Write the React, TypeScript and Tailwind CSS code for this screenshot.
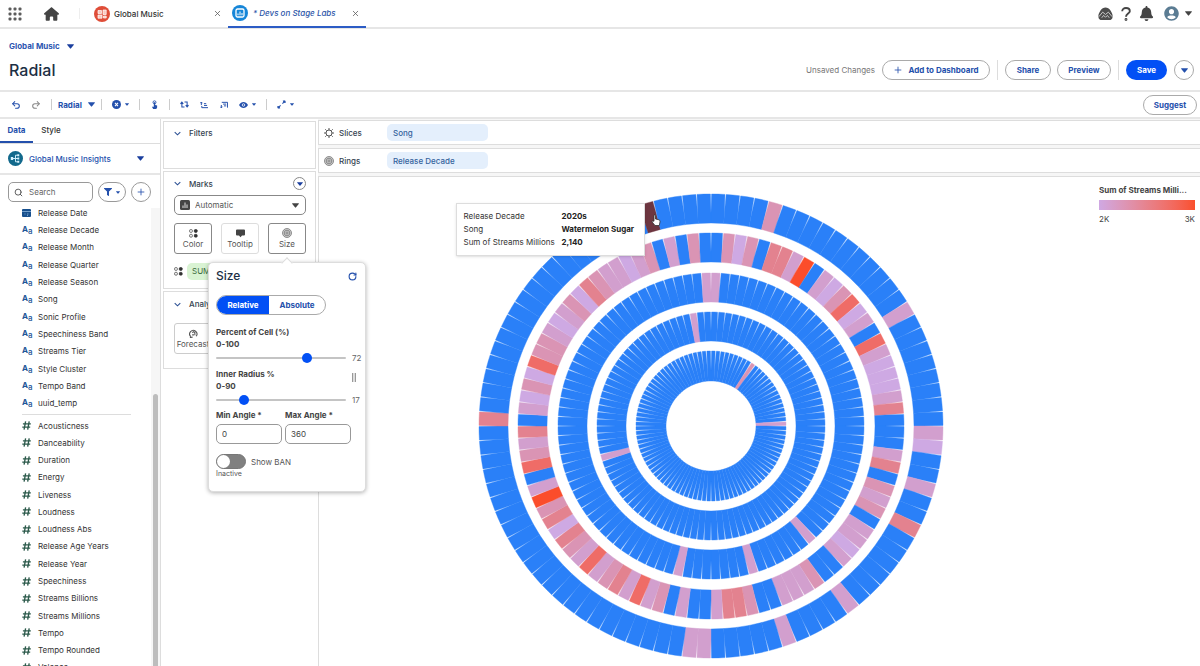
import React, { useState } from 'react'
import { Plus, Redo2, RotateCw, Search, Undo2, X } from 'lucide-react'
import { FaBell, FaFilter, FaUserCircle } from 'react-icons/fa'
import { FaHouse } from 'react-icons/fa6'

const dimensions = [
  'Release Date',
  'Release Decade',
  'Release Month',
  'Release Quarter',
  'Release Season',
  'Song',
  'Sonic Profile',
  'Speechiness Band',
  'Streams Tier',
  'Style Cluster',
  'Tempo Band',
  'uuid_temp',
]

const measures = [
  'Acousticness',
  'Danceability',
  'Duration',
  'Energy',
  'Liveness',
  'Loudness',
  'Loudness Abs',
  'Release Age Years',
  'Release Year',
  'Speechiness',
  'Streams Billions',
  'Streams Millions',
  'Tempo',
  'Tempo Rounded',
  'Valence',
]

// one letter per cell, low streams to high streams; B has no value in range
const cellColors: Record<string, string> = {
  B: '#2a80f8',
  l: '#cea9e3',
  p: '#d29fce',
  k: '#da94b4',
  s: '#e3828f',
  r: '#ef6c67',
  R: '#fb4d2b',
  D: '#6d3640',
}

const CELLS = 100

const sparse = (marks: Record<number, string>): string[] =>
  Array.from({ length: CELLS }, (_, i) => marks[i] ?? 'B')

const rings: { outer: number; inner: number; cells: string[] }[] = [
  {
    outer: 232,
    inner: 203,
    cells: sparse({ 4: 'k', 16: 'p', 25: 'p', 26: 'l', 29: 'p', 32: 's', 39: 'p', 44: 'p', 50: 'p', 51: 'p', 75: 's', 95: 'D' }),
  },
  {
    outer: 193,
    inner: 164,
    cells: (
      'BklkBsspRB' +
      'plkrlpBrpl' +
      'llpsBBBpsB' +
      'kpkBpplpBB' +
      'kpppBBkssp' +
      'BBpBkprpsk' +
      'prpkslskRp' +
      'BrkpsBplkl' +
      'rkkplpklsk' +
      'pplpkBpBkB'
    ).split(''),
  },
  { outer: 153, inner: 124, cells: sparse({ 0: 'p', 38: 'p', 45: 'p', 53: 'p', 99: 'p' }) },
  { outer: 114, inner: 85, cells: sparse({ 70: 'p', 97: 'p' }) },
  { outer: 75, inner: 45, cells: sparse({ 9: 'k', 24: 'p' }) },
]

const point = (radius: number, angle: number): string =>
  `${(radius * Math.sin(angle)).toFixed(2)},${(-radius * Math.cos(angle)).toFixed(2)}`

const cellPoints = (inner: number, outer: number, index: number): string => {
  const step = (Math.PI * 2) / CELLS
  const start = index * step
  const end = start + step
  const inset = 0.6 / outer
  const neck = inner + (outer - inner) * 0.35
  return [
    point(inner, start),
    point(neck, start),
    point(outer, start + inset),
    point(outer, (start + end) / 2),
    point(outer, end - inset),
    point(neck, end),
    point(inner, end),
  ].join(' ')
}

const RadialChart: React.FC = () => (
  <svg viewBox="-233 -233 466 466" className="block h-[466px] w-[466px]" role="img" aria-label="Streams by song and decade">
    {rings.map((ring) => (
      <g key={ring.outer}>
        {ring.cells.map((code, i) => (
          <polygon
            key={i}
            points={cellPoints(ring.inner, ring.outer, i)}
            fill={cellColors[code]}
            stroke={cellColors[code]}
            strokeWidth={0.4}
          />
        ))}
      </g>
    ))}
  </svg>
)

const Caret: React.FC<{ className?: string }> = ({ className = 'h-[5px] w-[7px]' }) => (
  <svg viewBox="0 0 8 5" className={`shrink-0 fill-current ${className}`}>
    <path d="M.6 0h6.8q.9.1.3.8L4.6 4.6q-.6.7-1.2 0L.3.8Q-.3.1.6 0z" />
  </svg>
)

const ColorIcon: React.FC = () => (
  <svg viewBox="0 0 10 10" className="h-[9px] w-[9px] shrink-0" fill="none" stroke="#555">
    <rect x=".7" y=".7" width="3" height="3" rx="1" />
    <rect x=".7" y="6" width="3" height="3" rx="1" />
    <rect x="6" y=".7" width="3" height="3" rx=".8" fill="#333" stroke="#333" />
    <rect x="6" y="6" width="3" height="3" rx=".8" fill="#333" stroke="#333" />
  </svg>
)

const RingsIcon: React.FC = () => (
  <svg viewBox="0 0 10 10" className="h-[10px] w-[10px] shrink-0" fill="#ccc" stroke="#777" strokeWidth=".8">
    <circle cx="5" cy="5" r="4.5" />
    <circle cx="5" cy="5" r="2.8" />
    <circle cx="5" cy="5" r="1.1" />
  </svg>
)

const SlicesIcon: React.FC = () => (
  <svg viewBox="0 0 10 10" className="h-[10px] w-[10px] shrink-0" fill="none" stroke="#555">
    <circle cx="5" cy="5" r="3" />
    <path d="M5 0v2M5 8v2M0 5h2M8 5h2M1.300 1.300l1.200 1.200M7.500 7.500l1.200 1.200M1.300 8.700l1.200-1.200M7.500 2.500l1.200-1.200" />
  </svg>
)

const Chevron: React.FC = () => (
  <svg viewBox="0 0 8 5" className="h-[5px] w-[7px]" fill="none" stroke="#2a4f93" strokeWidth="1.2">
    <path d="M.8.8L4 4 7.200.8" />
  </svg>
)

const TopBar: React.FC = () => (
  <header className="flex h-[29px] shrink-0 items-stretch border-b-2 border-[#e6e6e6] pl-2 pr-2">
    <button className="flex w-[14px] items-center" aria-label="App launcher">
      <svg viewBox="0 0 14 14" className="h-[14px] w-[14px]" fill="#5c5c5c">
        {[2, 7, 12].map((y) =>
          [2, 7, 12].map((x) => <rect key={`${x}${y}`} x={x - 1.5} y={y - 1.5} width="3" height="3" rx="1" />)
        )}
      </svg>
    </button>
    <a href="#home" className="ml-[22px] flex items-center text-[#444]" aria-label="Home">
      <FaHouse className="h-[14px] w-[15px]" />
    </a>
    <span className="my-2 ml-5 w-px bg-[#eee]" />
    <div className="ml-[14px] flex w-[134px] items-center">
      <svg viewBox="0 0 16 16" className="h-4 w-4">
        <circle cx="8" cy="8" r="8" fill="#df4d38" />
        <path d="M4 4.500h3.500v3H4zM9 4h3.200v4.500H9zM4 9h4v3.200H4zM9.500 10h2.700v2H9.500z" fill="#f9c9c0" stroke="#fff" strokeWidth=".7" />
      </svg>
      <a href="#global-music" className="ml-1 text-[8px] font-medium text-[#333]">Global Music</a>
      <button className="ml-auto mr-[6px] text-[#555]" aria-label="Close Global Music">
        <X className="h-[9px] w-[9px]" />
      </button>
    </div>
    <div className="-mb-px flex w-[138px] items-center border-b-2 border-[#2c5cc5] pl-1">
      <svg viewBox="0 0 16 16" className="h-4 w-4">
        <circle cx="8" cy="8" r="8" fill="#1686d8" />
        <rect x="4" y="4" width="8" height="8" rx="1.500" fill="none" stroke="#fff" strokeWidth="1.300" />
        <path d="M6 10.300V8.500M8 10.300V6.500M10 10.300V8" stroke="#fff" />
      </svg>
      <a href="#labs" className="ml-[5px] text-[8px] font-medium italic text-[#2c56a8]">* Devs on Stage Labs</a>
      <button className="ml-auto mr-[6px] text-[#555]" aria-label="Close Devs on Stage Labs">
        <X className="h-[9px] w-[9px]" />
      </button>
    </div>
    <div className="ml-auto flex items-center text-[#444]">
      <button aria-label="Guidance">
        <svg viewBox="0 0 16 14" className="h-[14px] w-[15px]">
          <path d="M8 0c2 0 4 1.200 5.500 3.500C15 6 16 8 15.500 10.500 15.300 12.500 14 13.500 12 13.500H4C2 13.500.700 12.500.5 10.500 0 8 1 6 2.500 3.500 4 1.200 6 0 8 0z" fill="#4d4d4d" />
          <path d="M1 9.800L5 5 8 7.500 11 5 15 9.800M4 11L6 8.500 8 10.500 10 8.500 12 11" fill="none" stroke="#ddd" strokeWidth=".9" />
        </svg>
      </button>
      <button className="ml-2" aria-label="Help">
        <svg viewBox="0 0 10 14" className="h-[14px] w-[10px]" fill="none" stroke="#444" strokeWidth="1.900">
          <path d="M1.200 4.300C1.200 2.200 2.800 1 5 1s3.800 1.200 3.800 3.200C8.800 6.500 5 6.800 5 9.800" />
          <circle cx="5" cy="12.500" r=".5" />
        </svg>
      </button>
      <button className="ml-2" aria-label="Notifications">
        <FaBell className="h-[15px] w-[15px]" />
      </button>
      <button className="ml-[10px] flex items-center gap-[6px]" aria-label="Account">
        <FaUserCircle className="h-[15px] w-[15px] text-[#5b7c93]" />
        <Caret />
      </button>
    </div>
  </header>
)

const PageHeader: React.FC = () => (
  <div className="flex h-[63px] shrink-0 items-end justify-between border-b-2 border-[#e6e6e6] pb-[10px] pl-[9px] pr-[6px]">
    <div>
      <button className="flex items-center gap-[7px] text-[8px] font-bold leading-[10px] text-[#2c56b0]">
        Global Music
        <Caret className="h-[5px] w-[7px] text-[#1b3f9e]" />
      </button>
      <h1 className="mt-[9px] text-base leading-5 font-medium text-[#1d2f45]">Radial</h1>
    </div>
    <div className="flex items-center text-[8px] font-bold text-[#2450ac]">
      <span className="mr-[7px] font-normal text-[#777]">Unsaved Changes</span>
      <button className="flex h-5 w-[108px] items-center justify-center gap-[5px] rounded-full border border-[#aaa]">
        <Plus className="h-[10px] w-[10px]" />
        Add to Dashboard
      </button>
      <span className="ml-[7px] h-5 w-px bg-[#ddd]" />
      <button className="ml-[7px] h-5 w-[46px] rounded-full border border-[#aaa]">Share</button>
      <button className="ml-[6px] h-5 w-[54px] rounded-full border border-[#aaa]">Preview</button>
      <span className="ml-[7px] h-5 w-px bg-[#ddd]" />
      <button className="ml-[7px] h-5 w-[41px] rounded-full bg-[#0250f5] text-white">Save</button>
      <button className="ml-[7px] flex h-5 w-5 items-center justify-center rounded-full border border-[#aaa]" aria-label="More save options">
        <Caret />
      </button>
    </div>
  </div>
)

const Divider: React.FC = () => <span className="h-[11px] w-px shrink-0 bg-[#ccc]" />

const Dot: React.FC = () => <Caret className="h-[3px] w-1" />

const Toolbar: React.FC = () => (
  <div className="flex h-[27px] shrink-0 items-center border-b-2 border-[#e6e6e6] pl-[11px] pr-[3px] text-[8px] font-bold text-[#2450ac]">
    <button aria-label="Undo"><Undo2 className="h-[10px] w-[10px]" strokeWidth={2.5} /></button>
    <button className="ml-[10px] mr-[10px] text-[#888]" aria-label="Redo"><Redo2 className="h-[10px] w-[10px]" strokeWidth={2.5} /></button>
    <Divider />
    <button className="mx-[6px] flex items-center gap-[6px]">Radial <Caret /></button>
    <Divider />
    <button className="ml-[10px] mr-[10px] flex items-center gap-1" aria-label="Clear">
      <svg viewBox="0 0 10 10" className="h-[9px] w-[9px]">
        <circle cx="5" cy="5" r="5" fill="#2450ac" />
        <path d="M3.300 3.300l3.400 3.400M6.700 3.300L3.300 6.700" stroke="#fff" strokeWidth="1.200" />
      </svg>
      <Dot />
    </button>
    <Divider />
    <button className="mx-[11px]" aria-label="Interactions">
      <svg viewBox="0 0 8 10" className="h-[9px] w-[7px]" fill="#2450ac">
        <circle cx="4" cy="2.500" r="1.700" fill="none" stroke="#2450ac" />
        <path d="M3.200 2.500h1.600v3L7 6.200v2.300L6 10H2.500L1 7.500l2.200.2z" />
      </svg>
    </button>
    <Divider />
    <button className="ml-[10px]" aria-label="Swap">
      <svg viewBox="0 0 10 8" className="h-[7px] w-[9px]" fill="none" stroke="#2450ac" strokeWidth="1.200">
        <path d="M5 6.800H2V2M.4 3.200L2 1.300l1.600 1.900M5 1.200h3V6M6.400 4.800L8 6.700l1.600-1.900" />
      </svg>
    </button>
    <button className="ml-[11px]" aria-label="Sort ascending">
      <svg viewBox="0 0 9 8" className="h-2 w-2" fill="none" stroke="#2450ac" strokeWidth="1.100">
        <path d="M1.500 4V.8M.2 2l1.300-1.300L2.800 2M4.500 2.500H7M4.500 4.500H8M2 7h7M2 5v2" />
      </svg>
    </button>
    <button className="ml-3" aria-label="Sort descending">
      <svg viewBox="0 0 9 8" className="h-2 w-2" fill="none" stroke="#2450ac" strokeWidth="1.100">
        <path d="M2 1h6.500v6M3.500 3H7M4.500 5H7M1.500 4v3.200M.2 5.900l1.300 1.300 1.300-1.300" />
      </svg>
    </button>
    <button className="ml-[11px] mr-[10px] flex items-center gap-1" aria-label="Visibility">
      <svg viewBox="0 0 10 8" className="h-[8px] w-[9px]">
        <path d="M0 4C2.500-.3 7.500-.3 10 4 7.500 8.300 2.500 8.300 0 4z" fill="#2450ac" />
        <circle cx="5" cy="4" r="1.400" fill="none" stroke="#fff" strokeWidth=".9" />
      </svg>
      <Dot />
    </button>
    <Divider />
    <button className="ml-[10px] flex items-center gap-1" aria-label="Fit">
      <svg viewBox="0 0 10 10" className="h-[9px] w-[9px]" fill="#2450ac" stroke="#2450ac">
        <path d="M6.800 1H9v2.200zM1 6.800V9h2.200z" />
        <path d="M8.500 1.500L6 4M1.500 8.500L4 6" strokeWidth="1.200" />
      </svg>
      <Dot />
    </button>
    <button className="ml-auto h-5 w-[54px] rounded-full border border-[#aaa]">Suggest</button>
  </div>
)

const FieldIcon: React.FC<{ name: string }> = ({ name }) =>
  name === 'Release Date' ? (
    <svg viewBox="0 0 9 8" className="h-2 w-[9px]">
      <rect width="9" height="8" rx="1" fill="#174f8d" />
      <path d="M0 2.500h9M2.500 5h1M5 5h1.500M5 6.500h1" stroke="#9cc3ea" strokeWidth=".7" />
    </svg>
  ) : (
    <span className="flex text-[8px] leading-[8px] font-bold text-[#1d5596]">
      A<span className="mt-[2px] font-medium">a</span>
    </span>
  )

const DataPanel: React.FC = () => (
  <aside className="flex w-[161px] shrink-0 flex-col border-r border-[#ddd] text-[8px] text-[#333]">
    <nav className="flex h-[25px] shrink-0 border-b border-[#ddd]">
      <button className="w-[33px] border-b-2 border-[#2450ac] font-bold text-[#2450ac]">Data</button>
      <button className="w-9 pb-[2px] font-medium">Style</button>
    </nav>
    <button className="flex h-[31px] shrink-0 items-center border-b-2 border-[#e6e6e6] pl-2 pr-[16px] text-[#2450ac]">
      <svg viewBox="0 0 16 16" className="h-[15px] w-[15px]">
        <circle cx="8" cy="8" r="8" fill="#12698c" />
        <path d="M4 8h4M11 4.500H8v7h3M8 8h3" fill="none" stroke="#d8f3ff" />
        <path d="M3 6.500h2.500v3H3zM10 3.500h2v2h-2zM10 7h2v2h-2zM10 10.500h2v2h-2z" fill="#d8f3ff" />
      </svg>
      <span className="ml-[6px] font-medium">Global Music Insights</span>
      <Caret className="ml-auto h-[5px] w-[7px] text-[#1b3f9e]" />
    </button>
    <div className="mt-[7px] flex shrink-0 items-center pl-2">
      <label className="flex h-5 w-[85px] items-center gap-[6px] rounded-[5px] border border-[#999] px-[5px]">
        <Search className="h-[9px] w-[9px] shrink-0 text-[#555]" strokeWidth={2.5} />
        <input className="w-full min-w-0 outline-none placeholder:text-[#666]" placeholder="Search" aria-label="Search fields" />
      </label>
      <button className="ml-[5px] flex h-5 w-7 items-center justify-center gap-1 rounded-full border border-[#999] text-[#2450ac]" aria-label="Filter fields">
        <FaFilter className="h-2 w-2" />
        <Dot />
      </button>
      <button className="ml-[5px] flex h-5 w-5 items-center justify-center rounded-full border border-[#999] text-[#2450ac]" aria-label="Add field">
        <Plus className="h-[10px] w-[10px]" />
      </button>
    </div>
    <div className="flex min-h-0 flex-1">
      <div className="min-w-0 flex-1 overflow-hidden pt-[2px] pl-[22px] pr-[20px]">
        <ul className="grid h-[208px] auto-rows-fr">
          {dimensions.map((name) => (
            <li key={name} className="flex items-center">
              <span className="flex w-4 shrink-0"><FieldIcon name={name} /></span>
              {name}
            </li>
          ))}
        </ul>
        <hr className="mt-[2px] mb-[2px] border-[#ddd]" />
        <ul className="grid h-[259px] auto-rows-fr">
          {measures.map((name) => (
            <li key={name} className="flex items-center">
              <svg viewBox="0 0 10 10" className="mr-[7px] h-[9px] w-[9px] shrink-0" fill="none" stroke="#2c5a4b" strokeWidth="1.500">
                <path d="M4 .5L2.300 9.500M8 .5L6.300 9.500M1 3.200h8.800M.3 6.800h8.800" />
              </svg>
              {name}
            </li>
          ))}
        </ul>
      </div>
      <div className="mt-[6px] w-[9px] bg-[#f6f6f6] px-[2px] pt-[186px]">
        <div className="h-full rounded-t bg-[#bdbdbd]" />
      </div>
    </div>
  </aside>
)

interface SliderProps {
  label: string
  min: number
  max: number
  value: number
  onChange: (value: number) => void
}

const Slider: React.FC<SliderProps> = ({ label, min, max, value, onChange }) => (
  <label className="block leading-3 font-bold text-[#444]">
    {label}
    <br />
    {min}-{max}
    <span className="mt-[3px] flex h-[10px] items-center gap-[6px] font-normal text-[#666]">
      <input
        type="range"
        min={min}
        max={max}
        value={value}
        onChange={(e) => onChange(Number(e.target.value))}
        className="h-[2px] w-[130px] appearance-none rounded bg-[#c4c4c4] [&::-webkit-slider-thumb]:h-[10px] [&::-webkit-slider-thumb]:w-[10px] [&::-webkit-slider-thumb]:appearance-none [&::-webkit-slider-thumb]:rounded-full [&::-webkit-slider-thumb]:bg-[#0250f5]"
      />
      {value}
    </span>
  </label>
)

const SizePopover: React.FC = () => {
  const [percent, setPercent] = useState<number>(72)
  const [radius, setRadius] = useState<number>(17)

  return (
    <div className="absolute top-[39px] -left-[60px] z-20 h-[230px] w-[158px] rounded-[5px] border border-[#ddd] bg-white pl-[7px] pr-[2px] text-left text-[8px] shadow-[0_1px_4px_rgba(0,0,0,0.3)]">
      <span className="absolute -top-1 left-[74px] h-2 w-2 rotate-45 border-t border-l border-[#ddd] bg-white" />
      <div className="flex items-center justify-between pt-1 pr-[6px]">
        <h2 className="text-xs leading-[18px] font-medium text-[#1d2f45]">Size</h2>
        <button aria-label="Reset"><RotateCw className="h-[9px] w-[9px] text-[#2450ac]" strokeWidth={3} /></button>
      </div>
      <div className="mt-[10px] flex h-5 w-[110px] overflow-hidden rounded-full border border-[#aaa] font-bold">
        <button className="w-[52px] bg-[#0250f5] text-white">Relative</button>
        <button className="flex-1 text-[#2450ac]">Absolute</button>
      </div>
      <div className="mt-[11px]">
        <Slider label="Percent of Cell (%)" min={0} max={100} value={percent} onChange={setPercent} />
      </div>
      <div className="relative mt-[5px]">
        <Slider label="Inner Radius %" min={0} max={90} value={radius} onChange={setRadius} />
        <span className="absolute top-[5px] right-[7px] h-[9px] w-1 border-x border-[#999] bg-[#ddd]" />
      </div>
      <div className="mt-[5px] flex gap-[3px] font-bold text-[#444]">
        <label className="w-[66px] leading-[10px]">
          Min Angle *
          <input defaultValue="0" className="mt-1 h-5 w-full rounded-[5px] border border-[#999] px-[5px] font-normal outline-none" />
        </label>
        <label className="w-[66px] leading-[10px]">
          Max Angle *
          <input defaultValue="360" className="mt-1 h-5 w-full rounded-[5px] border border-[#999] px-[5px] font-normal outline-none" />
        </label>
      </div>
      <label className="mt-[10px] flex items-center gap-[5px] text-[#555]">
        <input
          type="checkbox"
          className="flex h-[15px] w-[30px] appearance-none items-center rounded-full border border-[#777] bg-[#808080] before:h-[13px] before:w-[13px] before:rounded-full before:bg-white checked:justify-end checked:bg-[#0250f5]"
        />
        Show BAN
      </label>
      <p className="text-[7px] leading-[9px] text-[#555]">Inactive</p>
    </div>
  )
}

const markButton = 'flex h-[31px] w-[38px] flex-col items-center justify-center gap-px rounded-[3px] border text-[8px] leading-[10px] text-[#555]'

const MarksPanel: React.FC = () => (
  <aside className="flex w-[156px] shrink-0 flex-col gap-[2px] pt-[2px] pr-px pl-[2px] text-[8px] text-[#34424f]">
    <section className="h-12 border border-[#ddd] px-[10px]">
      <h3 className="flex h-[22px] items-center gap-[8px] font-medium"><Chevron />Filters</h3>
    </section>
    <section className="h-[118px] border border-[#ddd] pl-[10px] pr-[9px]">
      <div className="flex h-[23px] items-center justify-between">
        <h3 className="flex items-center gap-[8px] font-medium"><Chevron />Marks</h3>
        <button className="flex h-[13px] w-[13px] items-center justify-center rounded-full border border-[#888] text-[#1b3f9e]" aria-label="Marks menu">
          <Caret className="h-1 w-[6px]" />
        </button>
      </div>
      <div className="relative flex h-5 items-center">
        <svg viewBox="0 0 10 10" className="pointer-events-none absolute left-[6px] h-[10px] w-[10px]">
          <rect width="10" height="10" rx="1.500" fill="#444" />
          <path d="M3 8V5.500M5 8V2.500M7 8V4.500" stroke="#ddd" />
        </svg>
        <select className="h-5 w-full appearance-none rounded-[5px] border border-[#888] bg-transparent pl-5 text-[#555] outline-none" aria-label="Mark type">
          <option>Automatic</option>
        </select>
        <Caret className="pointer-events-none absolute right-[7px] h-[5px] w-[7px] text-[#444]" />
      </div>
      <div className="mt-2 flex justify-between">
        <button className={`${markButton} border-[#888]`}><ColorIcon />Color</button>
        <button className={`${markButton} border-[#ddd]`}>
          <svg viewBox="0 0 9 9" className="h-[9px] w-[9px]" fill="#444"><path d="M1 .5h7q1 0 1 1v4q0 1-1 1H6L4.500 8.300 3 6.500H1q-1 0-1-1v-4q0-1 1-1z" /></svg>
          Tooltip
        </button>
        <div className="relative">
          <button className={`${markButton} border-[#888]`}><RingsIcon />Size</button>
          <SizePopover />
        </div>
      </div>
      <div className="mt-[9px] flex items-center gap-1">
        <ColorIcon />
        <span className="h-[17px] flex-1 rounded-[5px] bg-[#d9f3d3] px-[5px] leading-[17px] text-[#3c6b3c]">SUM</span>
      </div>
    </section>
    <section className="h-[78px] border border-[#ddd] px-[10px]">
      <h3 className="flex h-6 items-center gap-[8px] font-medium"><Chevron />Analytics</h3>
      <button className={`${markButton} mt-[7px] border-[#ccc]`}>
        <svg viewBox="0 0 10 10" className="h-[9px] w-[9px]" fill="none" stroke="#555" strokeWidth="1.200">
          <path d="M2 8.500A4 4 0 1 1 8 8M1 9.500l3-.5M3.500 4l1.500-1 1.500 1v3M3.500 6.500h2" />
        </svg>
        Forecast
      </button>
    </section>
  </aside>
)

const Shelf: React.FC<{ icon: React.ReactNode; label: string; pill: string }> = ({ icon, label, pill }) => (
  <div className="flex h-[25px] items-center border border-r-0 border-[#ddd] bg-white pl-[5px]">
    {icon}
    <span className="ml-[5px] w-12 font-medium text-[#34424f]">{label}</span>
    <button className="h-[17px] w-[101px] rounded-[5px] bg-[#e4effc] px-[6px] text-left font-medium text-[#35639d]">{pill}</button>
  </div>
)

const tooltipRows: [string, string][] = [
  ['Release Decade', '2020s'],
  ['Song', 'Watermelon Sugar'],
  ['Sum of Streams Millions', '2,140'],
]

const Canvas: React.FC = () => (
  <main className="flex min-w-0 flex-1 flex-col pl-px text-[8px]">
    <div className="flex flex-col gap-[3px] bg-[#f6f6f6] pt-px pb-[3px]">
      <Shelf icon={<SlicesIcon />} label="Slices" pill="Song" />
      <Shelf icon={<RingsIcon />} label="Rings" pill="Release Decade" />
    </div>
    <div className="flex min-h-0 flex-1 items-start overflow-hidden border-t border-l border-[#ddd]">
      <div className="flex flex-1 justify-center pt-4 pl-[3px]">
        <div className="relative">
          <RadialChart />
          <table className="absolute top-[10px] -left-[22px] h-[53px] w-[189px] border-separate border-spacing-0 border border-[#ddd] bg-white px-[7px] pt-[5px] pb-[7px] text-left whitespace-nowrap text-[#333] shadow-sm">
            <tbody>
              {tooltipRows.map(([label, value]) => (
                <tr key={label}>
                  <th className="w-[98px] p-0 leading-3 font-normal">{label}</th>
                  <td className="p-0 leading-3 font-bold text-[#222]">{value}</td>
                </tr>
              ))}
            </tbody>
          </table>
          <svg viewBox="0 0 10 12" className="absolute top-[21px] left-[173px] h-3 w-[10px]" fill="#fff" stroke="#333" strokeWidth=".8">
            <path d="M3 1.300q1-.9 1.500.2V5l3.500.8q1.300.5 1 2L8.300 11.500H4L1 7.800q0-1.300 2-.6z" />
          </svg>
        </div>
      </div>
      <div className="mt-2 mr-[5px] w-24 shrink-0 text-[#444]">
        <p className="leading-[10px] font-bold whitespace-nowrap">Sum of Streams Milli...</p>
        <div className="mt-[5px] h-[10px] bg-linear-to-r from-[#cfa8e3] via-[#e7828c] to-[#fa4f2b]" />
        <div className="mt-1 flex justify-between leading-[10px]">
          <span>2K</span>
          <span>3K</span>
        </div>
      </div>
    </div>
  </main>
)

const App: React.FC = () => {
  return (
    <div className="flex h-screen flex-col overflow-hidden bg-white font-['Inter','Liberation_Sans',sans-serif]">
      <TopBar />
      <PageHeader />
      <Toolbar />
      <div className="flex min-h-0 flex-1">
        <DataPanel />
        <MarksPanel />
        <Canvas />
      </div>
    </div>
  )
}

export default App
